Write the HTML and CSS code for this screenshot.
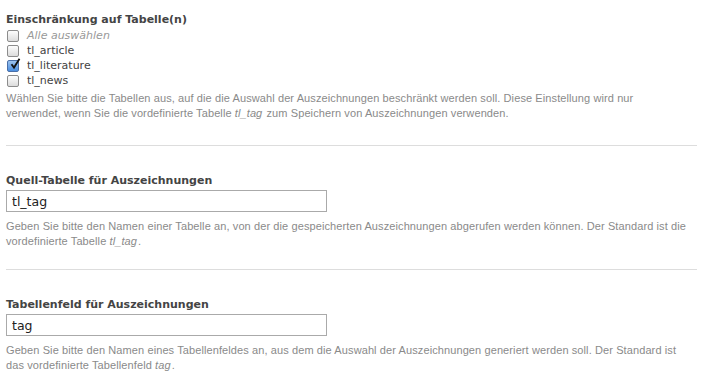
FILE: index.html
```html
<!DOCTYPE html>
<html>

<head>
  <meta charset="utf-8">
  <meta name="viewport" content="width=device-width">
  <title>Tags Einstellungen</title>
  <link rel="stylesheet" href="styles.css">
</head>

<body>
  <div class="widget first">
    <h3>Einschränkung auf Tabelle(n)</h3>
    <div class="checklist">
      <label class="check all"><span class="box"></span> Alle auswählen</label>
      <label class="check"><span class="box"></span> tl_article</label>
      <label class="check"><span class="box checked"><svg viewBox="0 0 12 12" width="12" height="12"><path d="M2.5 6.2 L5 9.6 L10.5 0.8" fill="none" stroke="#111" stroke-width="1.8"/></svg></span> tl_literature</label>
      <label class="check"><span class="box"></span> tl_news</label>
    </div>
    <p class="help">Wählen Sie bitte die Tabellen aus, auf die die Auswahl der Auszeichnungen beschränkt werden soll. Diese Einstellung wird nur verwendet, wenn Sie die vordefinierte Tabelle <em>tl_tag</em> zum Speichern von Auszeichnungen verwenden.</p>
  </div>

  <div class="widget">
    <h3>Quell-Tabelle für Auszeichnungen</h3>
    <input class="text" type="text" value="tl_tag">
    <p class="help">Geben Sie bitte den Namen einer Tabelle an, von der die gespeicherten Auszeichnungen abgerufen werden können. Der Standard ist die vordefinierte Tabelle <em>tl_tag</em>.</p>
  </div>

  <div class="widget">
    <h3>Tabellenfeld für Auszeichnungen</h3>
    <input class="text" type="text" value="tag">
    <p class="help">Geben Sie bitte den Namen eines Tabellenfeldes an, aus dem die Auswahl der Auszeichnungen generiert werden soll. Der Standard ist das vordefinierte Tabellenfeld <em>tag</em>.</p>
  </div>
</body>
</html>
```

FILE: styles.css
```css
html {
  background-color: #ffffff;
}

body {
  margin: 0;
  padding: 0 11px 0 6px;
  font-family: "Liberation Sans", Arial, sans-serif;
  color: #333;
}

.widget {
  border-top: 1px solid #ddd;
  padding: 27px 0 20px;
}

.widget.first {
  border-top: none;
  padding: 12px 0 24px;
}

h3 {
  margin: 0;
  font-family: "DejaVu Sans", Verdana, sans-serif;
  font-size: 11px;
  font-weight: bold;
  line-height: 16px;
  color: #444;
}

.checklist {
  display: flex;
  flex-direction: column;
}

.check {
  display: flex;
  align-items: center;
  gap: 8px;
  height: 15px;
  padding-left: 1px;
  font-family: "DejaVu Sans", Verdana, sans-serif;
  font-size: 11px;
  color: #444;
}

.check.all {
  font-style: italic;
  color: #999;
}

.box {
  position: relative;
  width: 10px;
  height: 10px;
  border: 1px solid #8c8c8c;
  border-radius: 2px;
  background: linear-gradient(#fdfdfd, #dcdcdc);
}

.box.checked {
  border-color: #4a6fa8;
  background: linear-gradient(#9cc3ef, #4a8ee0);
}

.box svg {
  position: absolute;
  left: 1px;
  top: -3px;
}

.text {
  display: block;
  box-sizing: border-box;
  width: 321px;
  height: 22px;
  margin: 1px 0 0;
  padding: 0 5px;
  border: 1px solid #aaa;
  font-family: "DejaVu Sans", Verdana, sans-serif;
  font-size: 12.5px;
  color: #222;
  outline: none;
}

.help {
  max-width: 682px;
  margin: 7px 0 0;
  font-size: 11px;
  letter-spacing: 0.1px;
  line-height: 15px;
  color: #8a8a8a;
}

.help em {
  padding-right: 1px;
}

.first .help {
  margin-top: 3px;
}
```
